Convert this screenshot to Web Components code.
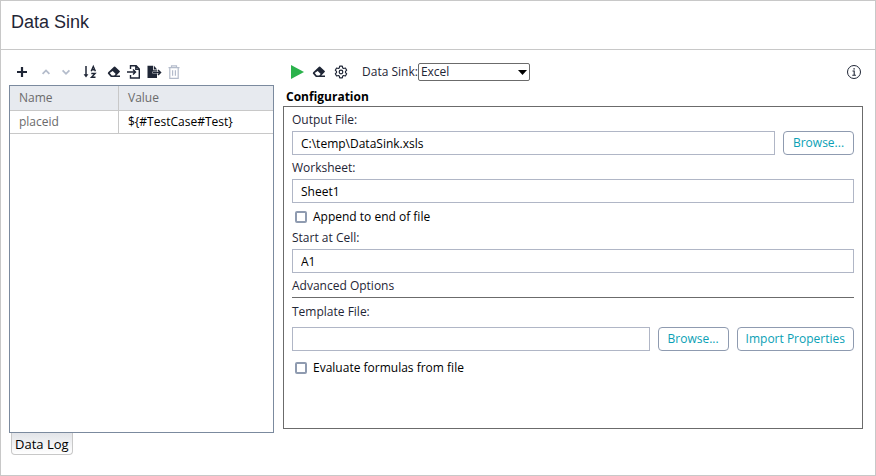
<!DOCTYPE html>
<html lang="en">
<head>
<meta charset="utf-8">
<title>Data Sink</title>
<style>
  body { margin: 0; background: #fff; color: #1f2636; font: 12px/16px "Open Sans", "Noto Sans", sans-serif; }
</style>
</head>
<body>
<ds-window heading="Data Sink">
  <ds-toolbar slot="left-tools">
    <ds-icon-button icon="plus" label="Add property"></ds-icon-button>
    <ds-icon-button icon="up" label="Move up" spaced disabled></ds-icon-button>
    <ds-icon-button icon="down" label="Move down" disabled></ds-icon-button>
    <ds-icon-button icon="sort" label="Sort" spaced></ds-icon-button>
    <ds-icon-button icon="eraser" label="Clear values" spaced></ds-icon-button>
    <ds-icon-button icon="import" label="Load"></ds-icon-button>
    <ds-icon-button icon="export" label="Save"></ds-icon-button>
    <ds-icon-button icon="trash" label="Delete" disabled></ds-icon-button>
  </ds-toolbar>
  <ds-properties slot="left"></ds-properties>
  <ds-tab slot="left">Data Log</ds-tab>
  <ds-toolbar slot="right-tools" wide>
    <ds-icon-button icon="play" label="Run"></ds-icon-button>
    <ds-icon-button icon="eraser" label="Clear"></ds-icon-button>
    <ds-icon-button icon="gear" label="Options"></ds-icon-button>
    <ds-select label="Data Sink:" options="Excel,File,JDBC"></ds-select>
    <ds-icon-button icon="info" label="Help" end></ds-icon-button>
  </ds-toolbar>
  <ds-group slot="right" heading="Configuration">
    <ds-field label="Output File:" value="C:\temp\DataSink.xsls"><ds-button>Browse...</ds-button></ds-field>
    <ds-field label="Worksheet:" value="Sheet1"></ds-field>
    <ds-check label="Append to end of file"></ds-check>
    <ds-field label="Start at Cell:" value="A1"></ds-field>
    <ds-section heading="Advanced Options">
      <ds-field label="Template File:" value="" roomy><ds-button>Browse...</ds-button><ds-button>Import Properties</ds-button></ds-field>
      <ds-check label="Evaluate formulas from file"></ds-check>
    </ds-section>
  </ds-group>
</ds-window>
<script>
const ICONS = {
  plus: '<path d="M8 3v10M3 8h10" stroke="currentColor" stroke-width="2.2" fill="none"/>',
  up: '<path d="M4.6 9.8 8 6.4l3.4 3.4" stroke="currentColor" stroke-width="1.8" fill="none"/>',
  down: '<path d="M4.6 6.4 8 9.800l3.4-3.4" stroke="currentColor" stroke-width="1.8" fill="none"/>',
  sort: '<path d="M4 2v10" stroke="currentColor" stroke-width="1.5"/><path d="M1.6 10.200h4.800L4 13.500z" fill="currentColor"/><path d="M9.200 7.200 11.300 2.500l2.100 4.700M10 5.800h2.700" stroke="currentColor" stroke-width="1.4" fill="none"/><path d="M9.300 9.500h3.800l-3.600 3.800h4" stroke="currentColor" stroke-width="1.4" fill="none"/>',
  eraser: '<path fill-rule="evenodd" fill="currentColor" d="M2.2 8.2 8 2.8q.6-.5 1.2 0l4.500 4.100q.6.6 0 1.200L10.300 11.400H14V13H4.900L2.200 10.100q-.9-1 0-1.900zM3.700 9.100l2.100 2.300h2.400l1.500-1.500-3-2.800z"/>',
  import: '<path d="M4.500 5V1.700h5.700L13.300 5v9H4.500v-3M9.800 1.700v3.600h3.500M1 8h8.200M7 5.600 9.500 8 7 10.400" stroke="currentColor" stroke-width="1.4" fill="none"/>',
  export: '<path d="M1.500 1.700h5.700v4.500H11v1.300H6.500v2H11v4.500H1.500z" fill="currentColor"/><path d="M8 1.700l3.200 3.700H8z" fill="currentColor"/><path d="M7 8.500h7M12 6l2.500 2.500L12 11" stroke="currentColor" stroke-width="1.5" fill="none"/>',
  trash: '<path d="M2.500 3.700h11M5.500 3.500V1.800h5v1.700M3.800 3.700v10.600h8.400V3.700M6.600 6.300v5.500M9.400 6.300v5.500" stroke="currentColor" stroke-width="1.2" fill="none"/>',
  play: '<path d="M2 1v14l13-7z" fill="#2bb24c"/>',
  gear: '<path d="M6.700 2.200h2.600l.4 1.700 1 .6 1.700-.5 1.300 2.200-1.200 1.200v1.200l1.200 1.200-1.300 2.200-1.700-.5-1 .6-.4 1.700H6.700l-.4-1.700-1-.6-1.700.5-1.300-2.200 1.200-1.200V7.400L2.300 6.200 3.600 4l1.700.5 1-.6z" stroke="currentColor" stroke-width="1.2" fill="none" stroke-linejoin="round"/><circle cx="8" cy="8" r="1.800" stroke="currentColor" stroke-width="1.200" fill="none"/>',
  info: '<circle cx="8" cy="8" r="6.500" stroke="currentColor" stroke-width="1" fill="none"/><path d="M6.500 7h1.700v4M6.300 11.300h3.600" stroke="currentColor" stroke-width="1.100" fill="none"/><path d="M7.400 4.200h1.400v1.400H7.400z" fill="currentColor"/>'
};
function define(name, css, html) {
  customElements.define(name, class extends HTMLElement {
    connectedCallback() {
      if (this.shadowRoot) return;
      const t = document.createElement('template');
      t.innerHTML = '<style>*{box-sizing:border-box}' + css + '</style>' + (typeof html === 'function' ? html(this) : html);
      this.attachShadow({ mode: 'open' }).append(t.content.cloneNode(true));
    }
  });
}
const attr = (el, n) => (el.getAttribute(n) || '').replace(/&/g, '&amp;').replace(/"/g, '&quot;').replace(/</g, '&lt;');

define('ds-window', `
  :host { display: flex; flex-direction: column; min-height: 100vh; box-sizing: border-box; border: 1px solid #c8c8c8; }
  header { padding: 7px 10px 13px; border-bottom: 1px solid #c8c8c8; }
  h1 { margin: 0; font: 18px/28px "Liberation Sans", Arial, sans-serif; color: #1f2636; }
  main { flex: 1; display: grid; grid-template-columns: minmax(200px, 265fr) minmax(400px, 580fr); gap: 9px; padding: 12px 12px 20px 8px; }
  .pane { display: flex; flex-direction: column; min-width: 0; }
  .right { padding-bottom: 26px; }
`, el => `<header><h1>${attr(el, 'heading')}</h1></header>
  <main><div class="pane"><slot name="left-tools"></slot><slot name="left"></slot></div>
  <div class="pane right"><slot name="right-tools"></slot><slot name="right"></slot></div></main>`);

define('ds-toolbar', `
  :host { display: flex; align-items: center; height: 20px; padding-left: 3px; margin-bottom: 3px; }
  :host([wide]) { --tool-width: 22px; }
`, '<slot></slot>');

define('ds-icon-button', `
  :host { display: block; width: var(--tool-width, 20px); }
  :host([spaced]) { margin-left: 4px; }
  :host([end]) { margin-left: auto; margin-right: -2px; }
  button { display: grid; place-items: center; width: 100%; height: 20px; padding: 0; border: 0; background: none; color: #1f2636; }
  button:disabled { color: #b4bccb; }
  svg { display: block; width: 16px; height: 16px; }
`, el => `<button type="button" aria-label="${attr(el, 'label')}" ${el.hasAttribute('disabled') ? 'disabled' : ''}><svg viewBox="0 0 16 16" aria-hidden="true">${ICONS[el.getAttribute('icon')]}</svg></button>`);

define('ds-select', `
  :host { display: flex; align-items: center; margin-left: 10px; }
  .box { display: grid; align-items: center; width: 112px; }
  select, svg { grid-area: 1 / 1; }
  select { appearance: none; width: 100%; height: 18px; margin: 0; padding: 0 20px 0 2px; border: 1px solid #6b6b6b; border-radius: 2px; background: #fff; color: #1f2636; font: inherit; }
  svg { justify-self: end; margin-right: 3px; pointer-events: none; }
`, el => `<label for="s">${attr(el, 'label')}</label><span class="box"><select id="s">${attr(el, 'options').split(',').map(o => `<option>${o}</option>`).join('')}</select>
  <svg width="9" height="5" viewBox="0 0 9 5" aria-hidden="true"><path d="M0 0h9L4.5 5z" fill="#000"/></svg></span>`);

define('ds-properties', `
  :host { display: block; flex: 1; border: 1px solid #7b8a9e; }
  table { width: 100%; border-collapse: separate; border-spacing: 0; table-layout: fixed; }
  th, td { padding: 0 9px; border-bottom: 1px solid #c8c8c8; text-align: left; font-weight: 400; color: #6b6b6b; }
  th { height: 25px; background: #e7eaef; }
  td { height: 23px; }
  th:first-child, td:first-child { width: 109px; border-right: 1px solid #c8c8c8; }
  td:last-child { color: #000; }
`, `<table><thead><tr><th scope="col">Name</th><th scope="col">Value</th></tr></thead>
  <tbody><tr><td>placeid</td><td>\${#TestCase#Test}</td></tr></tbody></table>`);

define('ds-tab', `
  :host { display: block; align-self: flex-start; margin-left: 2px; }
  button { display: block; height: 22px; padding: 0 3px; border: 1px solid #c8c8c8; border-top: 0; border-radius: 0 0 4px 4px; background: linear-gradient(#e2e4e8, #fff); color: #000; font: 13px/20px "Open Sans", "Noto Sans", sans-serif; }
`, '<button type="button"><slot></slot></button>');

define('ds-group', `
  :host { display: flex; flex-direction: column; flex: 1; }
  h2 { margin: 0; padding: 4px 0 1px 3px; font: bold 12px/16px "Open Sans", "Noto Sans", sans-serif; color: #000; }
  section { flex: 1; display: flex; flex-direction: column; gap: 5px; padding: 5px 8px; border: 1px solid #6b6b6b; }
`, el => `<h2>${attr(el, 'heading')}</h2><section><slot></slot></section>`);

define('ds-section', `
  :host { display: block; }
  h3 { margin: 0 0 6px; padding-bottom: 3px; border-bottom: 1px solid #6b6b6b; font: inherit; }
  div { display: flex; flex-direction: column; gap: 8px; }
`, el => `<h3>${attr(el, 'heading')}</h3><div><slot></slot></div>`);

define('ds-field', `
  :host { display: block; }
  label { display: block; margin-bottom: 3px; }
  :host([roomy]) label { margin-bottom: 7px; }
  div { display: flex; gap: 8px; }
  input { flex: 1; min-width: 0; height: 24px; margin: 0; padding: 0 8px; border: 1px solid #b0b6c6; background: #fff; color: #000; font: inherit; }
`, el => `<label for="i">${attr(el, 'label')}</label><div><input id="i" type="text" value="${attr(el, 'value')}"><slot></slot></div>`);

define('ds-check', `
  :host { display: block; }
  label { display: flex; align-items: center; gap: 6px; height: 17px; padding-left: 3px; color: #000; }
  input { appearance: none; width: 12px; height: 12px; margin: 0; border: 2px solid #8f9bb0; border-radius: 2px; background: #fff; }
  input:checked { background: #0a9fb5; }
`, el => `<label><input type="checkbox">${attr(el, 'label')}</label>`);

define('ds-button', `
  :host { display: block; }
  button { display: block; height: 24px; min-width: 71px; padding: 0 8px; border: 1px solid #8f9bb0; border-radius: 4px; background: #fff; color: #0a9fb5; font: inherit; }
`, '<button type="button"><slot></slot></button>');
</script>
</body>
</html>
